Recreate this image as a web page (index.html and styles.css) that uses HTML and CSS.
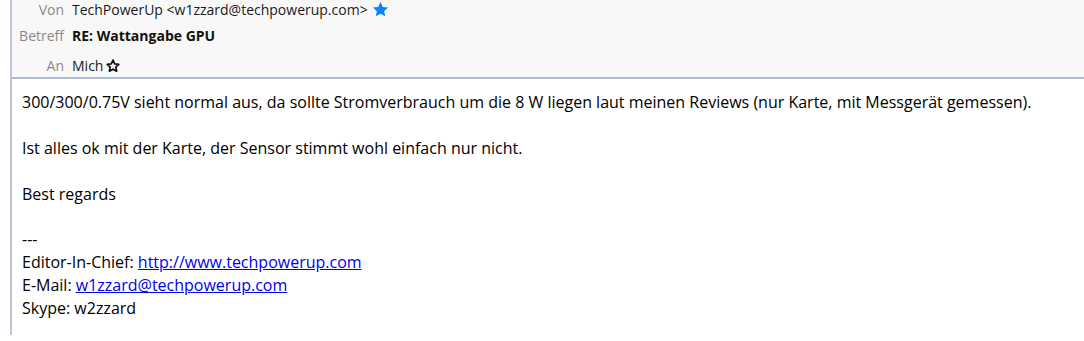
FILE: index.html
```html
<!DOCTYPE html>
<html>
<head>
  <title>RE: Wattangabe GPU</title>
  <link rel="stylesheet" href="styles.css">
</head>
<body>
  <div class="message">
    <div class="header">
      <div class="header-row row-from">
        <span class="label">Von</span>
        <span class="value">TechPowerUp &lt;w1zzard@techpowerup.com&gt;</span>
        <svg class="star star-filled" viewBox="0 0 24 24" width="17" height="17">
          <path d="M12 1.5l3.2 6.9 7.5.8-5.6 5.1 1.6 7.4L12 17.9l-6.7 3.8 1.6-7.4-5.6-5.1 7.5-.8z"/>
        </svg>
      </div>
      <div class="header-row row-subject">
        <span class="label">Betreff</span>
        <span class="value subject">RE: Wattangabe GPU</span>
      </div>
      <div class="header-row row-to">
        <span class="label">An</span>
        <span class="value">Mich</span>
        <svg class="star star-outline" viewBox="0 0 24 24" width="16" height="16">
          <path d="M12 3.2l2.6 5.6 6.1.7-4.5 4.2 1.2 6L12 16.7l-5.4 3 1.2-6-4.5-4.2 6.1-.7z"/>
        </svg>
      </div>
    </div>

    <div class="body">
      <p>300/300/0.75V sieht normal aus, da sollte Stromverbrauch um die 8 W liegen laut meinen Reviews (nur Karte, mit Messgerät gemessen).</p>
      <p>Ist alles ok mit der Karte, der Sensor stimmt wohl einfach nur nicht.</p>
      <p>Best regards</p>
      <p class="signature">
        ---<br>
        Editor-In-Chief: <a href="#">http://www.techpowerup.com</a><br>
        E-Mail: <a href="#">w1zzard@techpowerup.com</a><br>
        Skype: w2zzard
      </p>
    </div>
  </div>
</body>
</html>
```

FILE: styles.css
```css
body {
  margin: 0;
  padding: 0;
  background-color: #fff;
  font-family: "Open Sans", "Noto Sans", sans-serif;
  overflow: hidden;
}

.message {
  margin-left: 10px;
  border-left: 2px solid #bcc6d8;
  height: 341px;
}

.header {
  background-color: #f8f8f8;
  border-bottom: 2px solid #aebace;
  height: 79px;
  margin-top: -6px;
  padding-top: 4px;
  box-sizing: content-box;
}

.header-row {
  display: flex;
  align-items: center;
  font-size: 14px;
  color: #1a1a1a;
}

.row-from {
  height: 22px;
}

.row-subject {
  height: 30px;
}

.row-to {
  height: 31px;
}

.label {
  width: 52px;
  text-align: right;
  color: #8a8a8a;
  margin-right: 8px;
}

.subject {
  font-weight: bold;
  color: #111;
}

.star {
  margin-left: 4px;
}

.star-filled {
  fill: #0a84ff;
}

.star-outline {
  margin-left: 2px;
  fill: none;
  stroke: #111;
  stroke-width: 2.6;
  stroke-linejoin: round;
}

.body {
  padding: 12px 0 0 10px;
  font-family: "Open Sans", sans-serif;
  font-size: 16px;
  line-height: 22.9px;
  color: #000;
}

.body p {
  margin: 0 0 22.9px;
}

.body a {
  color: #0000ee;
}
```
